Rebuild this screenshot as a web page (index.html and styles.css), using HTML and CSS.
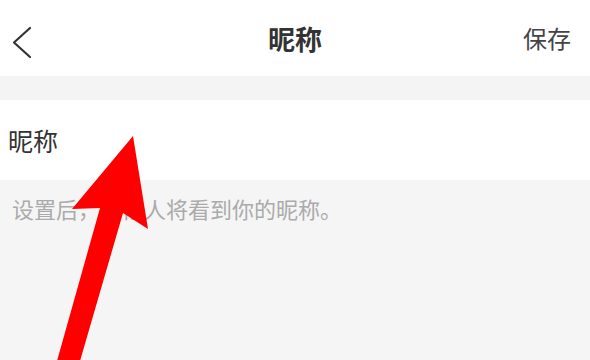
FILE: index.html
```html
<!DOCTYPE html>
<html lang="zh-CN">
<head>
<meta charset="utf-8">
<title>昵称</title>
<link rel="stylesheet" href="styles.css">
</head>
<body>
<div class="page">
  <header class="bar">
    <div class="back">
      <svg width="22" height="34" viewBox="0 0 22 34"><polyline points="19,2 3,16.5 19,31" fill="none" stroke="#333" stroke-width="2.2" stroke-linecap="round" stroke-linejoin="round"/></svg>
    </div>
    <div class="title">昵称</div>
    <div class="save">保存</div>
  </header>
  <div class="gap"></div>
  <div class="row">昵称</div>
  <div class="hint">设置后，其他人将看到你的昵称。</div>
  <svg class="arrow" width="590" height="360" viewBox="0 0 590 360">
    <polygon points="133,136 148,229 123,213 80,361 57,361 100,208 72,209" fill="#ff0000"/>
  </svg>
</div>
</body>
</html>
```
FILE: styles.css
```css
* { box-sizing: border-box; margin: 0; padding: 0; }
html, body { width: 590px; height: 360px; overflow: hidden; }
body { background: #f5f5f5; font-family: "Noto Sans CJK SC", "Noto Sans", sans-serif; }
.page { position: relative; width: 590px; height: 360px; }
.bar {
  height: 76px;
  background: #fff;
  display: grid;
  grid-template-columns: 1fr auto 1fr;
  align-items: center;
}
.back { padding: 9px 0 0 11px; display: flex; align-items: center; }
.back svg { display: block; }
.title { font-size: 27px; font-weight: 700; color: #333; line-height: 1; }
.save { justify-self: end; padding-right: 19px; font-size: 24px; color: #444; line-height: 1; }
.gap { height: 24px; background: #f4f4f4; }
.row {
  height: 80px;
  background: #fff;
  display: flex;
  align-items: center;
  padding-left: 8px;
  font-size: 25px;
  color: #333;
  line-height: 1;
}
.hint {
  padding: 17px 0 0 12px;
  font-size: 22px;
  line-height: 22px;
  color: #ababab;
}
.arrow { position: absolute; left: 0; top: 0; }
```
